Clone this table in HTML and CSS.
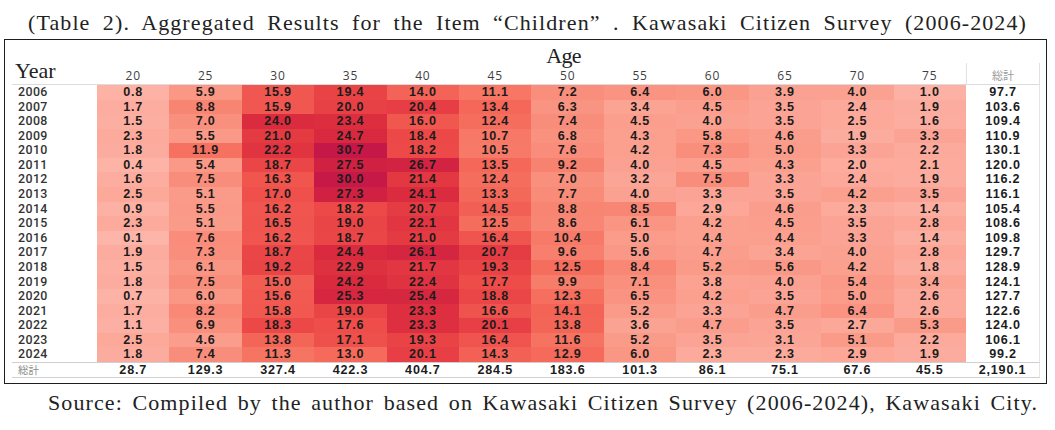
FILE: index.html
```html
<!DOCTYPE html>
<html lang="en">
<head>
<meta charset="utf-8">
<title>Table 2</title>
<link rel="stylesheet" href="styles.css">
</head>
<body>
<div class="title">(Table 2). Aggregated Results for the Item “Children” . Kawasaki Citizen Survey (2006-2024)</div>
<div class="box">
  <div class="grid" id="grid">
    <div class="year-head">Year</div>
    <div class="age-head">Age</div>
  </div>
</div>
<div class="source">Source: Compiled by the author based on Kawasaki Citizen Survey (2006-2024), Kawasaki City.</div>
<script src="script.js"></script>
</body>
</html>
```

FILE: styles.css
```css
html, body {
  margin: 0;
  padding: 0;
  background: #ffffff;
}
body {
  width: 1055px;
  height: 430px;
  overflow: hidden;
  color: #111;
}
.title, .source, .year-head, .age-head {
  font-family: "Liberation Serif", "Noto Sans CJK JP", serif;
  font-size: 22px;
  font-weight: 400;
  color: #222;
}
.title {
  width: 999px;
  height: 26px;
  line-height: 26px;
  padding: 10px 0 3px 28px;
  letter-spacing: 1.1px;
  white-space: nowrap;
  text-align: justify;
  text-align-last: justify;
}
.source {
  width: 990px;
  line-height: 26px;
  margin-top: 6px;
  padding-left: 48px;
  letter-spacing: 1.1px;
  white-space: nowrap;
  text-align: justify;
  text-align-last: justify;
}
.box {
  box-sizing: border-box;
  margin-left: 4px;
  width: 1043px;
  height: 345px;
  border: 1px solid #1e1e1e;
  padding: 0 6px 4px 7px;
}
.grid {
  display: grid;
  width: 1028px;
  grid-template-columns: 85px repeat(12, 1fr) 74px;
  grid-template-rows: 23px 22px repeat(19, 14.58px) 16px;
  font-family: "Liberation Sans", Arial, sans-serif;
}
.year-head {
  grid-column: 1;
  grid-row: 1 / span 2;
  box-sizing: border-box;
  border-bottom: 1px solid #dcdcdc;
  line-height: 22px;
  padding: 0 0 2px 3px;
  display: flex;
  align-items: flex-end;
}
.age-head {
  grid-column: 2 / span 13;
  grid-row: 1;
  line-height: 22px;
  padding: 5px 10px 0 0;
  letter-spacing: -0.8px;
  text-align: center;
}
.col-head {
  grid-row: 2;
  box-sizing: border-box;
  border-bottom: 1px solid #dcdcdc;
  text-align: center;
  font-family: "Open Sans", "Noto Sans", sans-serif;
  font-size: 12px;
  letter-spacing: 0.8px;
  line-height: 16px;
  padding-top: 5px;
  color: #3f3f3f;
}
.col-head.sum {
  border-left: 1px solid #e2e2e2;
  border-right: 1px solid #e2e2e2;
  font-family: "Noto Sans CJK JP", sans-serif;
  font-size: 11px;
  letter-spacing: 0;
  line-height: 15px;
  color: #9a9a9a;
}
.year {
  font-family: Roboto, "Liberation Sans", sans-serif;
  font-size: 12.4px;
  font-weight: 500;
  letter-spacing: 0.4px;
  color: #333;
  line-height: 14.58px;
  padding-left: 6px;
}
.cell, .tot {
  font-size: 12.6px;
  font-weight: 700;
  letter-spacing: 0.8px;
  line-height: 14.58px;
  text-align: center;
  color: #1c1c1c;
}
.tot {
  background: #ffffff;
  border-right: 1px solid #e6e6e6;
  padding-left: 1px;
}
.sum-row {
  box-sizing: border-box;
  border-top: 1px solid #cfcfcf;
  border-bottom: 1px solid #cfcfcf;
  font-size: 12.6px;
  font-weight: 700;
  letter-spacing: 0.8px;
  line-height: 14px;
  text-align: center;
  color: #1c1c1c;
}
.sum-row.label {
  font-family: "Noto Sans CJK JP", sans-serif;
  font-size: 10.5px;
  font-weight: 400;
  letter-spacing: 0;
  color: #8a8a8a;
  text-align: left;
  padding-left: 6px;
}
.sum-row.last {
  border-right: 1px solid #e6e6e6;
}
```

FILE: script.js
```javascript
(function () {
  var cols = [20, 25, 30, 35, 40, 45, 50, 55, 60, 65, 70, 75];
  var rows = [
    [2006, [0.8, 5.9, 15.9, 19.4, 14.0, 11.1, 7.2, 6.4, 6.0, 3.9, 4.0, 1.0], "97.7"],
    [2007, [1.7, 8.8, 15.9, 20.0, 20.4, 13.4, 6.3, 3.4, 4.5, 3.5, 2.4, 1.9], "103.6"],
    [2008, [1.5, 7.0, 24.0, 23.4, 16.0, 12.4, 7.4, 4.5, 4.0, 3.5, 2.5, 1.6], "109.4"],
    [2009, [2.3, 5.5, 21.0, 24.7, 18.4, 10.7, 6.8, 4.3, 5.8, 4.6, 1.9, 3.3], "110.9"],
    [2010, [1.8, 11.9, 22.2, 30.7, 18.2, 10.5, 7.6, 4.2, 7.3, 5.0, 3.3, 2.2], "130.1"],
    [2011, [0.4, 5.4, 18.7, 27.5, 26.7, 13.5, 9.2, 4.0, 4.5, 4.3, 2.0, 2.1], "120.0"],
    [2012, [1.6, 7.5, 16.3, 30.0, 21.4, 12.4, 7.0, 3.2, 7.5, 3.3, 2.4, 1.9], "116.2"],
    [2013, [2.5, 5.1, 17.0, 27.3, 24.1, 13.3, 7.7, 4.0, 3.3, 3.5, 4.2, 3.5], "116.1"],
    [2014, [0.9, 5.5, 16.2, 18.2, 20.7, 14.5, 8.8, 8.5, 2.9, 4.6, 2.3, 1.4], "105.4"],
    [2015, [2.3, 5.1, 16.5, 19.0, 22.1, 12.5, 8.6, 6.1, 4.2, 4.5, 3.5, 2.8], "108.6"],
    [2016, [0.1, 7.6, 16.2, 18.7, 21.0, 16.4, 10.4, 5.0, 4.4, 4.4, 3.3, 1.4], "109.8"],
    [2017, [1.9, 7.3, 18.7, 24.4, 26.1, 20.7, 9.6, 5.6, 4.7, 3.4, 4.0, 2.8], "129.7"],
    [2018, [1.5, 6.1, 19.2, 22.9, 21.7, 19.3, 12.5, 8.4, 5.2, 5.6, 4.2, 1.8], "128.9"],
    [2019, [1.8, 7.5, 15.0, 24.2, 22.4, 17.7, 9.9, 7.1, 3.8, 4.0, 5.4, 3.4], "124.1"],
    [2020, [0.7, 6.0, 15.6, 25.3, 25.4, 18.8, 12.3, 6.5, 4.2, 3.5, 5.0, 2.6], "127.7"],
    [2021, [1.7, 8.2, 15.8, 19.0, 23.3, 16.6, 14.1, 5.2, 3.3, 4.7, 6.4, 2.6], "122.6"],
    [2022, [1.1, 6.9, 18.3, 17.6, 23.3, 20.1, 13.8, 3.6, 4.7, 3.5, 2.7, 5.3], "124.0"],
    [2023, [2.5, 4.6, 13.8, 17.1, 19.3, 16.4, 11.6, 5.2, 3.5, 3.1, 5.1, 2.2], "106.1"],
    [2024, [1.8, 7.4, 11.3, 13.0, 20.1, 14.3, 12.9, 6.0, 2.3, 2.3, 2.9, 1.9], "99.2"]
  ];
  var totals = ["28.7", "129.3", "327.4", "422.3", "404.7", "284.5", "183.6", "101.3", "86.1", "75.1", "67.6", "45.5"];
  var grand = "2,190.1";

  var stops = [
    [0, [253, 182, 170]],
    [6, [250, 150, 132]],
    [12, [246, 112, 94]],
    [18, [237, 74, 72]],
    [24, [219, 43, 62]],
    [31, [196, 22, 72]]
  ];
  function color(v) {
    for (var i = 1; i < stops.length; i++) {
      if (v <= stops[i][0]) {
        var a = stops[i - 1], b = stops[i];
        var t = (v - a[0]) / (b[0] - a[0]);
        var c = [0, 1, 2].map(function (k) {
          return Math.round(a[1][k] + (b[1][k] - a[1][k]) * t);
        });
        return "rgb(" + c.join(",") + ")";
      }
    }
    return "rgb(196,22,72)";
  }

  var grid = document.getElementById("grid");
  function add(cls, text, bg) {
    var d = document.createElement("div");
    d.className = cls;
    d.textContent = text;
    if (bg) d.style.background = bg;
    grid.appendChild(d);
    return d;
  }

  cols.forEach(function (c) { add("col-head", String(c)); });
  add("col-head sum", "総計");

  rows.forEach(function (r) {
    add("year", String(r[0]));
    r[1].forEach(function (v) { add("cell", v.toFixed(1), color(v)); });
    add("tot", r[2]);
  });

  add("sum-row label", "総計");
  totals.forEach(function (t) { add("sum-row", t); });
  add("sum-row last", grand);
})();
```
